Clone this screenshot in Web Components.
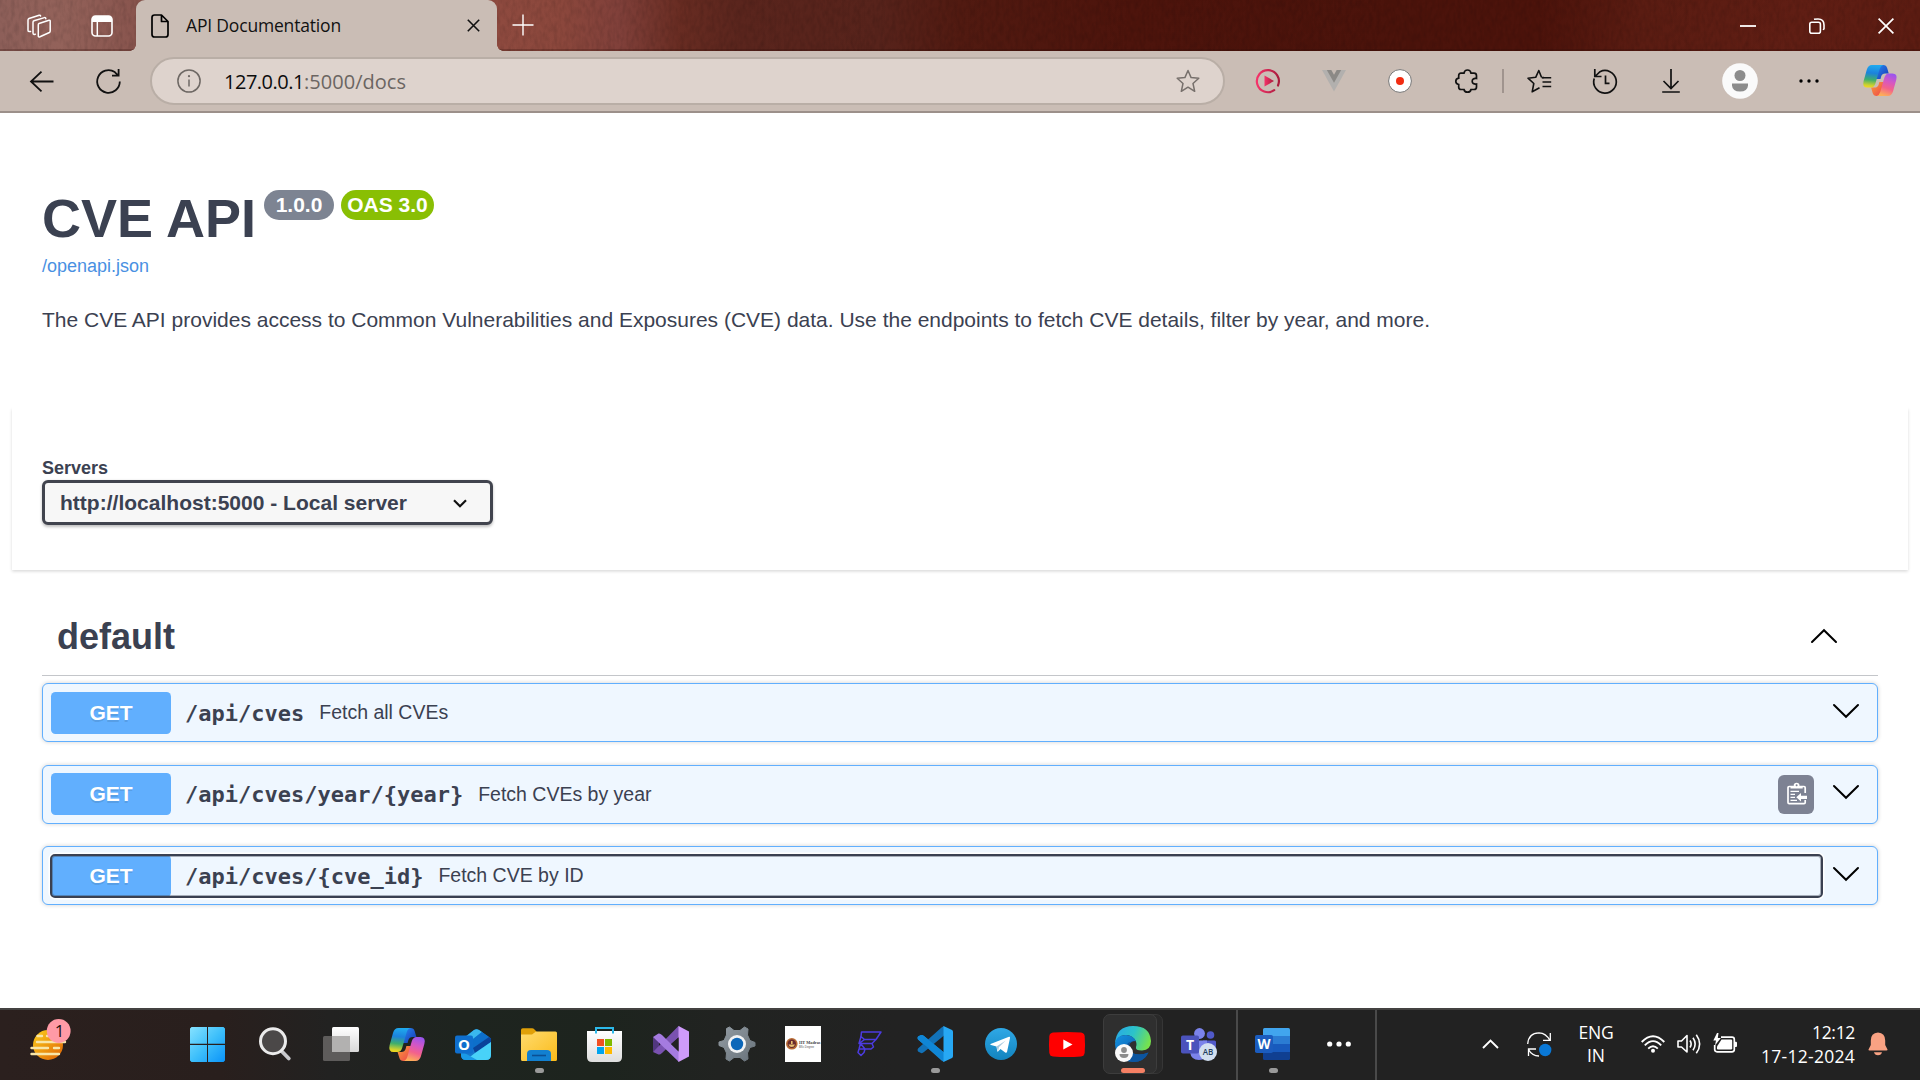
<!DOCTYPE html>
<html lang="en">
<head>
<meta charset="utf-8">
<title>API Documentation</title>
<style>
html,body{margin:0;padding:0}
body{width:1920px;height:1080px;overflow:hidden;background:#fff;font-family:"Liberation Sans",Arial,sans-serif}
</style>
</head>
<body>
<desktop-screen></desktop-screen>
<script>
const UI = '"Open Sans","Noto Sans",sans-serif';

function define(name, css, html, setup) {
  customElements.define(name, class extends HTMLElement {
    connectedCallback() {
      if (this.shadowRoot) return;
      const root = this.attachShadow({ mode: 'open' });
      root.innerHTML = '<style>*{box-sizing:border-box}:host{box-sizing:border-box}' + css + '</style>' + (typeof html === 'function' ? html(this) : html);
      if (setup) setup(this, root);
    }
  });
}

/* Icons: [width, height, markup] */
const copilot = `
<defs>
<linearGradient id="a" x1="0.4" y1="0" x2="0.3" y2="1"><stop offset="0" stop-color="#1fa9ee"/><stop offset=".35" stop-color="#1c82dc"/><stop offset=".65" stop-color="#3fae6c"/><stop offset=".9" stop-color="#cfd22e"/><stop offset="1" stop-color="#f3d81c"/></linearGradient>
<linearGradient id="b" x1="0.7" y1="0" x2="0.4" y2="1"><stop offset="0" stop-color="#9a55ee"/><stop offset=".35" stop-color="#d457c4"/><stop offset=".65" stop-color="#f3618c"/><stop offset="1" stop-color="#fdae58"/></linearGradient>
<linearGradient id="c" x1="0" y1="0" x2="1" y2="1"><stop offset="0" stop-color="#2a8cf2"/><stop offset="1" stop-color="#1434b4"/></linearGradient>
<linearGradient id="d" x1="0" y1="0" x2="1" y2="1"><stop offset="0" stop-color="#f8a03a"/><stop offset="1" stop-color="#ee3f4c"/></linearGradient>
</defs>
<path d="M15 0H21.5Q24.8 0 25.7 3.2L27.4 9H23.5Q20.4 9 19.4 12L18.600 15H13Z" fill="url(#c)"/>
<path d="M21 33H14.5Q11.2 33 10.3 29.8L8.6 24H12.5Q15.6 24 16.6 21L17.400 18H23Z" fill="url(#d)"/>
<path d="M9.5 0H21.5Q18.6 .8 17.6 4.5L13.3 19.5Q12 24 8.4 24H4.6Q-1 24 .6 17.2L4 5Q5.4 0 9.5 0Z" fill="url(#a)"/>
<path d="M26.5 33H14.5Q17.4 32.2 18.4 28.5L22.7 13.5Q24 9 27.6 9H31.4Q37 9 35.4 15.8L32 28Q30.6 33 26.5 33Z" fill="url(#b)"/>`;
const star = 'M12 1.5 15.1 8.6 22.8 9.3 17 14.5 18.7 22.3 12 18.2 5.3 22.3 7 14.5 1.2 9.3 8.9 8.6Z';
const ICONS = {
workspaces:[24,24,`<g fill="none" stroke="#fff" stroke-width="1.5" stroke-linejoin="round" stroke-linecap="round"><path d="M12 9.5 22 6.3Q23.2 6 23.2 7.3V17Q23.2 18 22.4 18.5L13 22.8Q11.3 23.4 11.3 22V10.8Q11.3 9.8 12 9.5Z"/><path d="M8.4 20.2 7 20.4Q6 20.3 6 19V8.2Q6 7.2 7 6.8L17.5 3.6Q18.8 3.4 18.8 4.8"/><path d="M3.6 17.6 2 17.6Q1 17.4 1 16.2V6Q1 5 2 4.5L12.2 1.2Q13.4 1 13.6 2"/></g>`],
tabactions:[22,22,`<rect x="1" y="1" width="20" height="20" rx="3.5" fill="none" stroke="#fff" stroke-width="1.6"/><path d="M1 7V4.5Q1 1 4.500 1H17.500Q21 1 21 4.500V7Z" fill="#fff"/><path d="M6.300 7V21" stroke="#fff" stroke-width="1.500"/>`],
doc:[18,24,`<path d="M3.500 1H10.500L17 7.500V20.500Q17 23 14.500 23H3.500Q1 23 1 20.500V3.500Q1 1 3.500 1ZM10.500 1V7.500H17" fill="none" stroke="#000" stroke-width="1.700" stroke-linejoin="round"/>`],
close:[13,13,`<path d="M.8.800 12.200 12.200M12.200.800.800 12.200" stroke="#111" stroke-width="1.600"/>`],
plus:[22,22,`<path d="M11 .500V21.500M.500 11H21.500" stroke="#fff" stroke-width="1.400"/>`],
back:[24,21,`<path d="M23.500 10.500H1M11.500 .700 1 10.500 11.500 20.300" fill="none" stroke="#111" stroke-width="1.800"/>`],
reload:[25,25,`<path d="M23.800 12.500A11.300 11.300 0 1 1 18.800 3.100L22 6.300M22.600 0V6.600H16" fill="none" stroke="#111" stroke-width="1.800"/>`],
info:[24,24,`<circle cx="12" cy="12" r="11.100" fill="none" stroke="#6e6864" stroke-width="1.500"/><path d="M12 10.500V17.500" stroke="#6e6864" stroke-width="1.500"/><circle cx="12" cy="7.200" r="1.100" fill="#6e6864"/>`],
star:[24,24,`<path d="${star}" fill="none" stroke="#77706c" stroke-width="1.500" stroke-linejoin="round"/>`],
play:[24,24,`<defs><linearGradient id="a"><stop offset="0" stop-color="#f5336a"/><stop offset="1" stop-color="#a81c3c"/></linearGradient></defs><path d="M22 16.500A11 11 0 1 0 18.200 21.200" fill="none" stroke="url(#a)" stroke-width="2.200" stroke-linecap="round"/><path d="M8.500 6.500 18 12 8.500 17.500Z" fill="url(#a)"/>`],
vue:[24,22,`<path d="M0 0H24L12 21.500Z" fill="#b2b0ae"/><path d="M4.800 0H19.200L12 12.800Z" fill="#8b8986"/><path d="M9.300 0H14.700L12 4.800Z" fill="#c5bab3"/>`],
record:[24,24,`<circle cx="12" cy="12" r="11.400" fill="#fff" stroke="#777" stroke-width="1"/><circle cx="12" cy="12" r="4" fill="#f22c12"/>`],
puzzle:[24,24,`<path d="M6 4.200H9Q9.500 1 12.500 1T16 4.200H19Q21.500 4.200 21.500 6.700V9.500Q17.200 9 17.200 12.200T21.500 15V18Q21.500 20.500 19 20.500H16Q15.500 23.200 12.500 23.200T9 20.500H6Q3.700 20.500 3.700 18V15.500Q.8 15 .8 12.300T3.700 9.200V6.500Q3.700 4.200 6 4.200Z" fill="none" stroke="#111" stroke-width="1.700"/>`],
fav:[25,24,`<path d="M14.500 8.400 17 8.500M14.500 8.300 11.800 1.500 8.700 8.300 1 9.200 6.800 14.500 5.200 22.800 12.500 18.800" fill="none" stroke="#111" stroke-width="1.600" stroke-linejoin="round"/><path d="M15 8.700H24.200M15.500 13H24.200M15.500 17.500H24.200" stroke="#111" stroke-width="1.600"/>`],
history:[25,25,`<path d="M1.200 9.500A11.300 11.300 0 1 0 7 2.700L2 7.500M1.800 0V7.500H8.500M12.500 6.500V14.300H16.500" fill="none" stroke="#111" stroke-width="1.700"/>`],
download:[18,24,`<path d="M9 0V19M1.500 12 9 19.500 16.500 12M.2 23H17.800" fill="none" stroke="#111" stroke-width="1.700"/>`],
avatar:[36,36,`<circle cx="18" cy="18" r="17.800" fill="#fafafa"/><circle cx="18" cy="12.500" r="5.500" fill="#8c8c8c"/><path d="M10 20.500H26V22.500Q25.500 28.500 18 28.500T10 22.500Z" fill="#8c8c8c"/>`],
dots:[20,4,`<circle cx="2" cy="2" r="1.700"/><circle cx="10" cy="2" r="1.700"/><circle cx="18" cy="2" r="1.700"/>`],
copilot:[36,33,copilot],
min:[16,2,`<path d="M0 1H16" stroke="#fff" stroke-width="1.800"/>`],
restore:[16,16,`<rect x=".8" y="4.300" width="10.600" height="11" rx="2" fill="none" stroke="#fff" stroke-width="1.600"/><path d="M5 1.200Q5.800 1 9 1Q15 1 15 7V10.500L14.300 12" fill="none" stroke="#fff" stroke-width="1.600"/>`],
wclose:[16,16,`<path d="M.6.600 15.400 15.400M15.400.600.600 15.400" stroke="#fff" stroke-width="1.700"/>`],
selchev:[14,9,`<path d="M1 1.300 7 7.200 13 1.300" fill="none" stroke="#111" stroke-width="2.200"/>`],
up:[26,14,`<path d="M1 13 13 1.200 25 13" fill="none" stroke="#000" stroke-width="2" stroke-linecap="round"/>`],
down:[26,14,`<path d="M1 1 13 12.800 25 1" fill="none" stroke="#000" stroke-width="2" stroke-linecap="round"/>`],
clip:[20,23,`<path d="M6 4.500H2.200Q1 4.500 1 5.700V20.500Q1 21.700 2.200 21.700H17Q18.200 21.700 18.200 20.500V18M18.200 11V5.700Q18.200 4.500 17 4.500H13" fill="none" stroke="#fff" stroke-width="1.700"/><path d="M3.500 6.500V5Q3.500 4 5 4H6.500Q6.800 .8 9.600.800T12.700 4H14.200Q15.700 4 15.700 5V6.500Z" fill="#fff"/><circle cx="9.600" cy="3.300" r="1" fill="#7d8293"/><path d="M3.500 9.300H12M3.500 12.300H8M3.500 15.300H8M3.500 18.300H10" stroke="#fff" stroke-width="1.300"/><path d="M9.300 15.300 14 11V13.700H20V16.900H14V19.600Z" fill="#fff"/>`],
weather:[41,42,`<defs><linearGradient id="a" x1="0" y1="0" x2="1" y2="1"><stop offset="0" stop-color="#fbcf1c"/><stop offset="1" stop-color="#e06204"/></linearGradient></defs><circle cx="18" cy="26" r="15" fill="url(#a)"/><g stroke-linecap="round" stroke-width="2.400" stroke="#f8e6a8"><path d="M7.500 17H12M17 17H20M7 23H35M1.500 29H18M24 29H29M1.500 35H29"/></g><circle cx="28.700" cy="12" r="11.900" fill="#ff9aa6"/><text x="29.500" y="18" text-anchor="middle" font-family='${UI}' font-size="17" fill="#1a1212">1</text>`],
windows:[35,35,`<defs><linearGradient id="a" x1="0" y1="0" x2="35" y2="35" gradientUnits="userSpaceOnUse"><stop offset="0" stop-color="#86e2ff"/><stop offset=".5" stop-color="#3fc0fb"/><stop offset="1" stop-color="#0a93f8"/></linearGradient></defs><path d="M1.500 0H17V16.800H0V1.500ZM18 0H33.500L35 1.500V16.800H18ZM0 18H17V35H1.500L0 33.500ZM18 18H35V33.500L33.500 35H18Z" fill="url(#a)"/>`],
search:[34,34,`<path d="M23.500 24 30.800 31.500" stroke="#c9c9cd" stroke-width="3.800" stroke-linecap="round"/><circle cx="15" cy="14.200" r="12.500" fill="#4b4848" stroke="#ebebeb" stroke-width="3"/>`],
taskview:[36,34,`<defs><linearGradient id="a" x1="0" y1="0" x2="0" y2="1"><stop offset="0" stop-color="#fff"/><stop offset="1" stop-color="#d8d8d8"/></linearGradient></defs><rect x="9" y="0" width="27" height="25" rx="1.500" fill="url(#a)"/><rect x="0" y="9" width="27" height="25" rx="1.500" fill="#5e5c5b"/><path d="M9 9H27V25H9Z" fill="#b2b1b0"/>`],
outlook:[36,31,`<path d="M6 11 19 1Q21.500-.5 24 1L36 9.500V26Q36 31 31 31H11Q6 31 6 26Z" fill="#1779cc"/><path d="M9 9 19 1Q21.500-.5 24 1L27 3 13 14Z" fill="#39b7ee"/><path d="M27 3 34 8 18 19 13 14Z" fill="#0d6fcb"/><path d="M34 8 36 9.500V13L20 24 18 19Z" fill="#0a439a"/><path d="M36 13V26Q36 31 31 31H11L20 24Z" fill="#48d2f8"/><path d="M6 22 22 31H11Q6 31 6 26Z" fill="#1a9ae6"/><rect x="0" y="6.500" width="18" height="18" rx="2" fill="#0f6fce"/><text x="9" y="21" text-anchor="middle" font-family='${UI}' font-weight="700" font-size="15" fill="#fff">O</text>`],
folder:[36,33,`<defs><linearGradient id="a" x1="0" y1="0" x2="1" y2="1"><stop offset="0" stop-color="#ffdb6e"/><stop offset="1" stop-color="#fabb1a"/></linearGradient></defs><path d="M0 2Q0 .3 1.700.300H11Q12.500.300 13.500 1.500L15.500 3.500 12 9H0Z" fill="#e0a008"/><path d="M0 6.500H11L15 3.500H34.500Q36 3.500 36 5V31.500Q36 33 34.500 33H1.500Q0 33 0 31.500Z" fill="url(#a)"/><path d="M6 33V26Q6 22 10 22H26Q30 22 30 26V33Z" fill="#1280d0"/><path d="M11 27.500H25" stroke="#0b4f93" stroke-width="1.600"/>`],
store:[35,35,`<defs><linearGradient id="a" x1="0" y1="0" x2="0" y2="1"><stop offset="0" stop-color="#fff"/><stop offset="1" stop-color="#dedede"/></linearGradient></defs><path d="M0 4H35V30Q35 35 30 35H5Q0 35 0 30Z" fill="url(#a)"/><path d="M9 6.500V1H26V6.500" fill="none" stroke="#2cb9ea" stroke-width="2"/><path d="M10 12H17V19H10Z" fill="#f25022"/><path d="M18 12H25V19H18Z" fill="#7fba00"/><path d="M10 20H17V27H10Z" fill="#00a4ef"/><path d="M18 20H25V27H18Z" fill="#ffb900"/>`],
vs:[36,36,`<path d="M0 11 6 14V22L0 26Z" fill="#52377e"/><path d="M0 26 5.500 28.500Q7 29 9 27L27 10V1L25.500 0Z" fill="#7a52b0"/><path d="M0 11 5.500 7.500Q7 7 9 9L26 26V36Z" fill="#a57be0"/><path d="M25.500 0 36 5.500V30.500L25.500 36Z" fill="#cf9bfa"/><path d="M18 18 25.500 11.500V25Z" fill="#222"/>`],
gear:[36,36,`<defs><linearGradient id="a" x1="0" y1="0" x2="1" y2="1"><stop offset="0" stop-color="#929ba2"/><stop offset="1" stop-color="#69737b"/></linearGradient></defs><path d="M7.500 2.500 10.500 1 15 4.500H21L25.500 1 29 3 28.500 9 31 14.500 36 16.500V20L31 21.500 28.500 27 29 33 25.500 35 21 31.500H15L10.500 35 7 33 7.500 27 5 21.500 0 19.500V16L5 14.500 7.500 9Z" fill="url(#a)" stroke="url(#a)" stroke-width="1" stroke-linejoin="round"/><circle cx="18" cy="18" r="9" fill="#f2f3f4"/><circle cx="18" cy="18" r="6.200" fill="#0c67b9"/>`],
iitm:[36,36,`<path d="M0 0H36V36H0Z" fill="#fff"/><circle cx="6.800" cy="17.800" r="5.800" fill="#b96d35"/><circle cx="6.800" cy="17.800" r="4.200" fill="#6a2a2e"/><path d="M3.500 18.500H10Q9 21 6.700 21T3.500 18.500ZM6 15H7.600V18H6Z" fill="#e8c070"/><text x="14" y="18.300" textLength="21.500" lengthAdjust="spacingAndGlyphs" font-family="Liberation Serif,serif" font-weight="700" font-size="5" fill="#444">IIT Madras</text><text x="14" y="21.800" textLength="15" lengthAdjust="spacingAndGlyphs" font-family="Liberation Sans,sans-serif" font-size="3" fill="#555">BSc Degree</text>`],
fbolt:[26,26,`<g fill="none" stroke="#4c3be0" stroke-width="1.500" stroke-linejoin="round"><path d="M5 1.500H24.500L19.500 9H8L4.500 6ZM4.500 6 2.500 13H15.500L19.500 9M8 9 2.500 13M15.500 13 17 16.500 14.500 18.500H8.500L4 13M2.500 18.500H8.500L7.500 22 4.500 25 1.500 22ZM4 13 2.500 18.500" transform="translate(.5 -.5)"/></g>`],
vscode:[36,36,`<path d="M1 10.500 4 9Q5.500 8.500 7 10L27 26.500V36L24.500 34.500 1 13.500Q0 12 1 10.500Z" fill="#1689d4"/><path d="M1 25.500 4 27Q5.500 27.500 7 26L27 9.500V0L24.500 1.500 1 22.500Q0 24 1 25.500Z" fill="#1272b8"/><path d="M1 10.500 4 9Q5.500 8.500 7 10L27 26.500V35L1 13.500Q0 12 1 10.500Z" fill="#0f86d6"/><path d="M26.500 0 35 4Q36 4.500 36 6V30Q36 31.500 35 32L26.500 36Z" fill="#27a8f4"/>`],
telegram:[32,32,`<defs><linearGradient id="a" x1="0" y1="0" x2="0" y2="1"><stop offset="0" stop-color="#2fa8e6"/><stop offset="1" stop-color="#1284bf"/></linearGradient></defs><circle cx="16" cy="16" r="16" fill="url(#a)"/><path d="M5.500 16 24 8.800Q25.300 8.500 25 10L22 24Q21.500 25.300 20.200 24.500L15.500 21 13 23.500Q12.300 24 12.200 23L11.500 18.500 6 17Q4.800 16.500 5.500 16Z" fill="#fff"/><path d="M11.500 18.500 20.800 12.500 14 19 13 23.500" fill="#a9c9df"/>`],
youtube:[36,25,`<path d="M4 .6Q18-.6 32 .600 35.400 1 35.700 4.500 36.300 12.500 35.700 20.500 35.400 24 32 24.400 18 25.600 4 24.400.600 24 .3 20.500-.3 12.500.300 4.500.600 1 4 .6Z" fill="#f00"/><path d="M14.300 7.500 23.500 12.500 14.300 17.500Z" fill="#fff"/>`],
edge:[36,36,`<defs><linearGradient id="a" x1="0" y1=".2" x2="1" y2=".5"><stop offset="0" stop-color="#28a9e6"/><stop offset=".5" stop-color="#2cc3c9"/><stop offset="1" stop-color="#76e24d"/></linearGradient><linearGradient id="b" x1="0" y1="0" x2="1" y2="1"><stop offset="0" stop-color="#1391e0"/><stop offset="1" stop-color="#0b4a9c"/></linearGradient></defs><path d="M0 18Q1 0 18 0T36 15Q36 24 27 24.500 20 24.500 21 21 22.500 17 19.500 13Q14 7 6 10 1.500 12.500 0 18Z" fill="url(#a)"/><path d="M0 18Q1 9 11 9 18 9.500 21 15 14 15 14 20.500 15 28.500 24 28.500 29 28.500 33.500 26.500 29 36 18 36 1 35 0 18Z" fill="url(#b)"/><path d="M21 15Q14 14.500 14 20.500 15 28.500 24 28.500 29 28.500 33.500 26.500 29 36 18 36 8 31 10 22 12 14.500 21 15Z" fill="#0c559f"/><circle cx="9" cy="27" r="9" fill="#fafafa"/><circle cx="9" cy="24" r="2.900" fill="#8c8c8c"/><path d="M4.500 28H13.500Q13.500 32 9 32T4.500 28Z" fill="#8c8c8c"/>`],
teams:[36,33,`<circle cx="18.500" cy="5.500" r="5.400" fill="#7b83eb"/><circle cx="29.500" cy="7" r="3.800" fill="#5059c9"/><path d="M22 12.500H33.500Q35 12.500 35 14V22H22Z" fill="#5059c9"/><path d="M9 12.500H26V23Q26 32 18 32T9 24Z" fill="#7b83eb"/><rect x="0" y="7.500" width="18" height="18" rx="1.800" fill="#4b53bc"/><text x="9" y="21.700" text-anchor="middle" font-family='${UI}' font-weight="700" font-size="14" fill="#fff">T</text><circle cx="27" cy="24" r="9" fill="#d2dff0"/><text x="27" y="27" text-anchor="middle" font-family='${UI}' font-weight="600" font-size="8" fill="#24405f">AB</text>`],
word:[36,32,`<path d="M8 1.500Q8 0 9.500 0H33.500Q35 0 35 1.500V8H8Z" fill="#41a5ee"/><path d="M8 8H35V16H8Z" fill="#2b7cd3"/><path d="M8 16H35V24H8Z" fill="#185abd"/><path d="M8 24H35V30.500Q35 32 33.500 32H9.500Q8 32 8 30.500Z" fill="#103f91"/><rect x="0" y="7" width="18" height="18" rx="1.800" fill="#1b5cbe"/><text x="9" y="21.200" text-anchor="middle" font-family='${UI}' font-weight="700" font-size="13.500" fill="#fff">W</text>`],
tdots:[24,6,`<g fill="#fff"><circle cx="2.700" cy="3" r="2.600"/><circle cx="12" cy="3" r="2.600"/><circle cx="21.300" cy="3" r="2.600"/></g>`],
tchev:[17,10,`<path d="M1 9 8.500 1.500 16 9" fill="none" stroke="#fff" stroke-width="1.900"/>`],
sync:[25,25,`<g fill="none" stroke="#fff" stroke-width="1.300"><path d="M.7 12Q1.500 1 12 .8 19 1 22.800 8.300M23.300 1V8.300H16M1.500 24V17H9M1.500 17.500Q5 24 12 24"/></g><circle cx="18.200" cy="18" r="6.200" fill="#0a78d6"/>`],
wifi:[24,18,`<g fill="none" stroke="#fff" stroke-width="1.900"><path d="M.7 7Q12-4.500 23.300 7M3.800 10.300Q12 2 20.200 10.300M7.200 13.600Q12 9 16.800 13.600"/></g><circle cx="12" cy="15.800" r="2" fill="#fff"/>`],
speaker:[25,20,`<g fill="none" stroke="#fff" stroke-width="1.600" stroke-linejoin="round"><path d="M1 7H4.500L10 1.500V18L4.500 13H1ZM13 6.500Q15.300 10 13 13.500M16 3.700Q20.300 10 16 16.300M19.300 .7Q26 10 19.300 19.300"/></g>`],
battery:[25,20,`<path d="M8 4.200H19Q21.300 4.200 21.300 6.500V16.500Q21.300 18.800 19 18.800H4Q1.700 18.800 1.700 16.500V12" fill="none" stroke="#fff" stroke-width="1.700"/><path d="M8.500 6.500H18Q19.200 6.500 19.200 7.700V15.300Q19.200 16.500 18 16.500H5Q4 16.500 4 15.300V13.500Z" fill="#fff"/><path d="M22 8.800H23Q24 8.800 24 9.800V13Q24 14 23 14H22Z" fill="#fff"/><path d="M4 0 .3 7.500H3L2 12.500 7.800 5H4.800L5.500 0Z" fill="#fff"/>`],
bell:[20,24,`<path d="M10 .5Q17.200 1 17.200 8.500V13L19.500 17.500Q19.700 18.500 18.500 18.500H1.500Q.3 18.500.500 17.500L2.800 13V8.500Q2.800 1 10 .5ZM6 20.300H14Q13.300 23.300 10 23.300T6 20.300Z" fill="#f9a283"/>`]
};

define('ui-icon', ':host{display:block;flex:none}svg{display:block;overflow:visible}', el => {
  const [w, h, body] = ICONS[el.getAttribute('name')];
  const k = +(el.getAttribute('scale') || 1);
  return `<svg width="${w * k}" height="${h * k}" viewBox="0 0 ${w} ${h}">${body}</svg>`;
});

/* Text tracked so that its run fills the given width */
define('fit-text', ':host{display:block;flex:none;white-space:nowrap}span{display:inline-block}', '<span><slot></slot></span>', (el, root) => {
  const span = root.querySelector('span'), w = +el.getAttribute('w');
  const n = el.textContent.length;
  span.style.letterSpacing = (w - span.getBoundingClientRect().width) / n + 'px';
  el.style.width = w + 'px';
});

define('browser-tabs', `
:host{display:flex;height:51px;background:linear-gradient(90deg,#8d5f59 0,#93625a 60px,#89554e 134px,#8e4a3f 500px,#8b473c 560px,#80403a 620px,#682c22 680px,#5a251d 740px,#57231b 880px,#511a11 960px,#4d140c 1130px,#4b130b 1400px,#4c130b 1540px,#5a1c12 1640px,#601e14 1800px,#5c1c12 1920px);align-items:center;position:relative;isolation:isolate}
.grain{position:absolute;inset:0;width:100%;height:100%;z-index:-1}
.tab{align-self:stretch;width:361px;margin-left:23px;background:#cabdb5;border-radius:9px 9px 0 0;display:flex;align-items:center;padding-left:15px;font:17.5px/24px ${UI};color:#111;position:relative}
.tab::before,.tab::after{content:"";position:absolute;bottom:0;width:6px;height:6px}
.tab::before{left:-6px;background:radial-gradient(circle at 0 0,transparent 5.500px,#cabdb5 6px)}
.tab::after{right:-6px;background:radial-gradient(circle at 100% 0,transparent 5.500px,#cabdb5 6px)}
.ctl{margin-left:auto;display:flex;align-items:center;margin-right:26px;gap:53px}`, `
<svg class="grain"><defs><filter id="n" x="0" y="0" width="100%" height="100%"><feTurbulence type="fractalNoise" baseFrequency=".26 .12" numOctaves="2" seed="4"/><feColorMatrix values="0 0 0 0 0  0 0 0 0 0  0 0 0 0 0  1.200 0 0 0 -.45"/></filter></defs><rect width="100%" height="100%" filter="url(#n)" opacity=".18"/><rect y="49" width="100%" height="2" fill="#2a0c08" opacity=".25"/></svg>
<ui-icon name="workspaces" style="margin-left:27px"></ui-icon>
<ui-icon name="tabactions" style="margin-left:40px"></ui-icon>
<div class="tab"><ui-icon name="doc"></ui-icon><fit-text w="155" style="margin-left:17px;margin-top:-1px">API Documentation</fit-text><ui-icon name="close" style="margin-left:126px"></ui-icon></div>
<ui-icon name="plus" style="margin-left:15px;margin-top:-1px"></ui-icon>
<div class="ctl"><ui-icon name="min"></ui-icon><ui-icon name="restore"></ui-icon><ui-icon name="wclose"></ui-icon></div>`);

define('browser-toolbar', `
:host{display:flex;height:62px;background:#cabdb5;border-bottom:2px solid #9c908a;align-items:center}
.pill{width:1075px;height:48px;border:2px solid #b9aea6;border-radius:24px;background:#ded3cd;display:flex;align-items:center;padding-left:25px;margin-left:29px;font:20px/28px ${UI};color:#0c0c0c}
.pill fit-text{padding-top:1px}
.rest{color:#6b6562}
.sep{width:2px;height:24px;background:#a0948e;margin-left:23px}`, `
<ui-icon name="back" style="margin-left:30px"></ui-icon>
<ui-icon name="reload" style="margin-left:42px"></ui-icon>
<div class="pill"><ui-icon name="info"></ui-icon><fit-text w="80" style="margin-left:23px">127.0.0.1</fit-text><fit-text class="rest" w="102">:5000/docs</fit-text><ui-icon name="star" style="margin-left:770px"></ui-icon></div>
<ui-icon name="play" style="margin-left:31px"></ui-icon>
<ui-icon name="vue" style="margin-left:42px"></ui-icon>
<ui-icon name="record" style="margin-left:42px"></ui-icon>
<ui-icon name="puzzle" style="margin-left:43px"></ui-icon>
<div class="sep"></div>
<ui-icon name="fav" style="margin-left:23px"></ui-icon>
<ui-icon name="history" style="margin-left:41px"></ui-icon>
<ui-icon name="download" style="margin-left:44px"></ui-icon>
<ui-icon name="avatar" style="margin-left:42px"></ui-icon>
<ui-icon name="dots" style="margin-left:41px"></ui-icon>
<ui-icon name="copilot" scale=".94" style="margin-left:44px"></ui-icon>`);

define('version-badge', `:host{display:block;height:30px;border-radius:15px;color:#fff;font:bold 21px/30px "Liberation Sans",Arial,sans-serif;text-align:center;flex:none}`, '<slot></slot>');

define('api-info', `
:host{display:block;padding:75px 42px 0;color:#3b4151}
.head{display:flex;height:62px}
h2{margin:0;width:222px;font-size:54px;line-height:60px;font-weight:700;white-space:nowrap}
version-badge{margin-top:2px}
a{display:block;margin-top:6px;font-size:18px;line-height:20px;color:#4990e2}
p{margin:32px 0 0;font-size:21px;line-height:24px}`, `
<div class="head"><h2>CVE API</h2><version-badge style="background:#7d8492;width:70px">1.0.0</version-badge><version-badge style="background:#89bf04;width:93px;margin-left:7px">OAS 3.0</version-badge></div>
<a>/openapi.json</a>
<p><fit-text w="1388">The CVE API provides access to Common Vulnerabilities and Exposures (CVE) data. Use the endpoints to fetch CVE details, filter by year, and more.</fit-text></p>`);

define('server-picker', `
:host{display:block;margin:75px 12px 0;height:163px;padding:51px 30px 0;box-shadow:0 1.500px 3px rgba(0,0,0,.15);color:#3b4151}
label{display:block;font-size:18px;line-height:20px;font-weight:700;margin-bottom:2px}
.select{width:451px;height:45px;border:3px solid #41444e;border-radius:6px;background:#f7f7f7;box-shadow:0 1.500px 3px rgba(0,0,0,.25);display:flex;align-items:center;justify-content:space-between;padding:0 23px 0 15px;font-size:21px;font-weight:700}`, `
<label>Servers</label><div class="select"><fit-text w="347">http://localhost:5000 - Local server</fit-text><ui-icon name="selchev" style="margin-top:2px"></ui-icon></div>`);

define('api-tag', `
:host{display:flex;margin:27px 42px 7px;height:79px;border-bottom:1px solid rgba(59,65,81,.3);align-items:center;justify-content:space-between;padding:0 41px 0 15px;color:#3b4151;font-size:36px;line-height:42px;font-weight:700}
span{margin-top:2px}`, `
<span><slot></slot></span><ui-icon name="up"></ui-icon>`);

define('api-operation', `
:host{display:flex;margin:0 42px;height:59px;border:1px solid #61affe;border-radius:6px;background:#eff7ff;box-shadow:0 0 4.500px rgba(0,0,0,.19);padding-left:8px;color:#3b4151}
.row{display:flex;align-items:center;height:42px;margin-top:var(--dy,8px);flex:1}
:host([focused]) .row{border-radius:4px;margin-right:11px;position:relative}
:host([focused]) .row::after{content:"";position:absolute;inset:-1px -1px -1px -1px;border:2px solid #3b4151;border-radius:5px;box-shadow:0 0 0 1.500px #fff,inset 0 0 0 1px rgba(59,65,81,.4)}
.method{width:120px;height:42px;border-radius:4.500px;background:#61affe;color:#fff;font-size:21px;line-height:42px;font-weight:700;text-align:center;text-shadow:0 1.500px 0 rgba(0,0,0,.1)}
.path{margin-left:14px;font:bold 22px/26px "DejaVu Sans Mono",monospace;margin-top:2px}
.sum{margin-left:15px;font-size:19.500px;line-height:22px;margin-top:var(--st,-2px);flex:1}
.copy{width:36px;height:39px;border-radius:6px;background:#7d8293;display:flex;align-items:center;justify-content:center;padding-left:2px;margin-right:19px}
.copy ui-icon{margin-top:-2px}
.chev{margin-right:18px;margin-top:calc(var(--dy,8px) + 12px)}`, el => `
<div class="row"><div class="method">GET</div><div class="path">${el.getAttribute('path')}</div><div class="sum">${el.getAttribute('summary')}</div>${el.hasAttribute('copy') ? '<div class="copy"><ui-icon name="clip"></ui-icon></div>' : ''}</div><ui-icon class="chev" name="down"></ui-icon>`);

define('api-page', ':host{display:block;height:895px;background:#fff;overflow:hidden}', `
<api-info></api-info>
<server-picker></server-picker>
<api-tag>default</api-tag>
<api-operation path="/api/cves" summary="Fetch all CVEs"></api-operation>
<api-operation path="/api/cves/year/{year}" summary="Fetch CVEs by year" copy style="margin-top:23px;--dy:7px;--st:0px"></api-operation>
<api-operation path="/api/cves/{cve_id}" summary="Fetch CVE by ID" focused style="margin-top:22px"></api-operation>`);

define('task-item', `
:host{display:flex;width:66px;height:72px;align-items:center;justify-content:center;position:relative;flex:none}
ui-icon{position:relative}
i{position:absolute;top:60px;left:50%;width:9px;height:5px;margin-left:-4.500px;border-radius:3px;background:#9a9a9a}
:host([active]) i{width:24px;margin-left:-12px;background:#f58064}
.tile,.behind{position:absolute;top:6px;height:60px;border-radius:7px;background:#2f2f2f;border:1px solid #3d3d3d}
.tile{left:3px;width:54px}.behind{left:12px;width:51px;background:#292929;border-color:#363636}`, el =>
  (el.hasAttribute('active') ? '<div class="behind"></div><div class="tile"></div>' : '') +
  `<ui-icon name="${el.getAttribute('icon')}"></ui-icon>` +
  (el.hasAttribute('open') ? '<i></i>' : ''));

define('task-bar', `
:host{display:flex;height:72px;align-items:center;color:#fff;font:17.500px/24px ${UI};background:linear-gradient(90deg,#2b201e 0,#291f1d 220px,#222221 330px,#1e241f 460px,#1d241e 600px,#212321 720px,#222 900px,#222 1920px);box-shadow:inset 0 2px 0 #444241}
.div{width:2px;height:70px;margin-top:2px;background:#4a4a4a}
.lang{line-height:23px;margin-left:25px;width:38px;display:flex;flex-direction:column;align-items:center}
.clock{display:flex;flex-direction:column;align-items:flex-end;margin-left:auto;margin-right:13px;margin-top:-1px}`, `
<ui-icon name="weather" style="margin:-9px 103px 0 30px"></ui-icon>
<task-item icon="windows" style="width:67px"></task-item>
<task-item icon="search" style="width:67px"></task-item>
<task-item icon="taskview"></task-item>
<task-item icon="copilot"></task-item>
<task-item icon="outlook"></task-item>
<task-item icon="folder" open></task-item>
<task-item icon="store" style="padding-right:1px"></task-item>
<task-item icon="vs"></task-item>
<task-item icon="gear"></task-item>
<task-item icon="iitm"></task-item>
<task-item icon="fbolt"></task-item>
<task-item icon="vscode" open></task-item>
<task-item icon="telegram"></task-item>
<task-item icon="youtube"></task-item>
<task-item icon="edge" open active></task-item>
<task-item icon="teams"></task-item>
<div class="div" style="margin-left:4px;margin-right:2px"></div>
<task-item icon="word" open></task-item>
<task-item icon="tdots"></task-item>
<div class="div" style="margin-left:3px"></div>
<ui-icon name="tchev" style="margin-left:105px"></ui-icon>
<ui-icon name="sync" style="margin-left:28px"></ui-icon>
<div class="lang"><fit-text w="35">ENG</fit-text><fit-text w="18">IN</fit-text></div>
<ui-icon name="wifi" style="margin-left:26px"></ui-icon>
<ui-icon name="speaker" style="margin-left:12px"></ui-icon>
<ui-icon name="battery" style="margin-left:11px;margin-top:-3px"></ui-icon>
<div class="clock"><fit-text w="43">12:12</fit-text><fit-text w="94">17-12-2024</fit-text></div>
<ui-icon name="bell" style="margin-right:32px"></ui-icon>`);

define('desktop-screen', ':host{display:block;width:1920px;height:1080px;overflow:hidden}', `
<browser-tabs></browser-tabs><browser-toolbar></browser-toolbar><api-page></api-page><task-bar></task-bar>`);
</script>
</body>
</html>
